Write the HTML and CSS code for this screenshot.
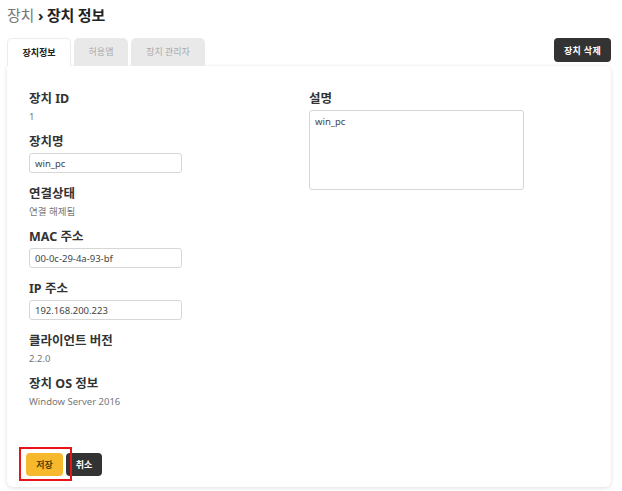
FILE: index.html
```html
<!DOCTYPE html>
<html lang="ko">
<head>
<meta charset="utf-8">
<link rel="stylesheet" href="styles.css">
</head>
<body>
<div class="page">
  <h1 class="title"><span class="crumb">장치</span> <span class="sep">›</span> 장치 정보</h1>
  <div class="tabbar">
    <div class="tabs">
      <div class="tab active">장치정보</div>
      <div class="tab">허용앱</div>
      <div class="tab">장치 관리자</div>
    </div>
    <button class="btn-delete">장치 삭제</button>
  </div>
  <div class="card">
    <div class="grid">
      <div class="col">
        <div class="field">
          <div class="label">장치 ID</div>
          <div class="value">1</div>
        </div>
        <div class="field">
          <div class="label">장치명</div>
          <input class="input" value="win_pc">
        </div>
        <div class="field">
          <div class="label">연결상태</div>
          <div class="value">연결 해제됨</div>
        </div>
        <div class="field">
          <div class="label">MAC 주소</div>
          <input class="input" value="00-0c-29-4a-93-bf">
        </div>
        <div class="field">
          <div class="label">IP 주소</div>
          <input class="input" value="192.168.200.223">
        </div>
        <div class="field">
          <div class="label">클라이언트 버전</div>
          <div class="value">2.2.0</div>
        </div>
        <div class="field">
          <div class="label">장치 OS 정보</div>
          <div class="value">Window Server 2016</div>
        </div>
      </div>
      <div class="col">
        <div class="field">
          <div class="label">설명</div>
          <textarea class="textarea">win_pc</textarea>
        </div>
      </div>
    </div>
    <div class="actions">
      <div class="save-wrap">
        <button class="btn btn-save">저장</button>
        <span class="highlight"></span>
      </div>
      <button class="btn btn-cancel">취소</button>
    </div>
  </div>
</div>
</body>
</html>
```
FILE: styles.css
```css
* { box-sizing: border-box; }
html, body { margin: 0; padding: 0; background: #fff; }
body {
  font-family: "Noto Sans", "Noto Sans CJK KR", sans-serif;
  color: #333;
}
.page { padding: 5px 11px 4px 7px; }
.title {
  margin: 0;
  font-size: 15px;
  line-height: 20px;
  font-weight: 700;
  color: #222;
  letter-spacing: -0.2px;
}
.crumb { font-weight: 400; color: #777; }
.sep { font-weight: 700; }
.tabbar {
  display: flex;
  justify-content: space-between;
  align-items: flex-start;
  margin-top: 13px;
}
.tabs { display: flex; gap: 3px; }
.tab {
  height: 28px;
  line-height: 27px;
  font-size: 9px;
  color: #aaa;
  background: #e9e9e9;
  border-radius: 5px 5px 0 0;
  text-align: center;
}
.tab:nth-child(1) { width: 64px; }
.tab:nth-child(2) { width: 54px; }
.tab:nth-child(3) { width: 74px; }
.tab.active {
  background: #fff;
  color: #222;
  font-weight: 700;
  border: 1px solid #ececec;
  border-bottom: none;
  position: relative;
  z-index: 1;
}
.btn-delete {
  width: 57px;
  height: 24px;
  border: none;
  border-radius: 4px;
  background: #333;
  color: #fff;
  font-family: inherit;
  font-size: 9px;
  font-weight: 700;
  letter-spacing: 0.3px;
  padding: 0;
}
.card {
  background: #fff;
  border-radius: 0 6px 6px 6px;
  box-shadow: 0 1px 4px rgba(0, 0, 0, 0.13);
  padding: 24px 22px 11px 22px;
  height: 421px;
  display: flex;
  flex-direction: column;
}
.grid {
  display: grid;
  grid-template-columns: 280px 1fr;
}
.field { padding-bottom: 9px; }
.label {
  font-size: 12.5px;
  line-height: 18px;
  font-weight: 700;
  color: #333;
  margin-bottom: 2px;
}
.value {
  font-size: 9.5px;
  line-height: 14px;
  color: #777;
}
.input {
  display: block;
  width: 153px;
  height: 20px;
  border: 1px solid #d6d6d6;
  border-radius: 3px;
  padding: 0 5px;
  font-family: inherit;
  font-size: 9.5px;
  color: #444;
  margin: 0 0 3px 0;
  outline: none;
}
.textarea {
  display: block;
  width: 215px;
  height: 80px;
  border: 1px solid #d6d6d6;
  border-radius: 3px;
  padding: 4px 5px;
  font-family: inherit;
  font-size: 9.5px;
  color: #444;
  resize: none;
  outline: none;
  margin: 0;
}
.actions {
  margin-top: auto;
  display: flex;
  gap: 3px;
  margin-left: -3px;
}
.save-wrap { position: relative; }
.btn {
  height: 23px;
  border: none;
  border-radius: 4px;
  font-family: inherit;
  font-size: 9px;
  font-weight: 700;
  padding: 0;
  display: block;
}
.btn-save { width: 37px; background: #f6b82d; color: #5a4000; }
.btn-cancel { width: 36px; background: #333; color: #fff; }
.highlight {
  position: absolute;
  left: -7px;
  top: -6px;
  width: 53px;
  height: 34px;
  border: 2px solid #e8141a;
}
```
